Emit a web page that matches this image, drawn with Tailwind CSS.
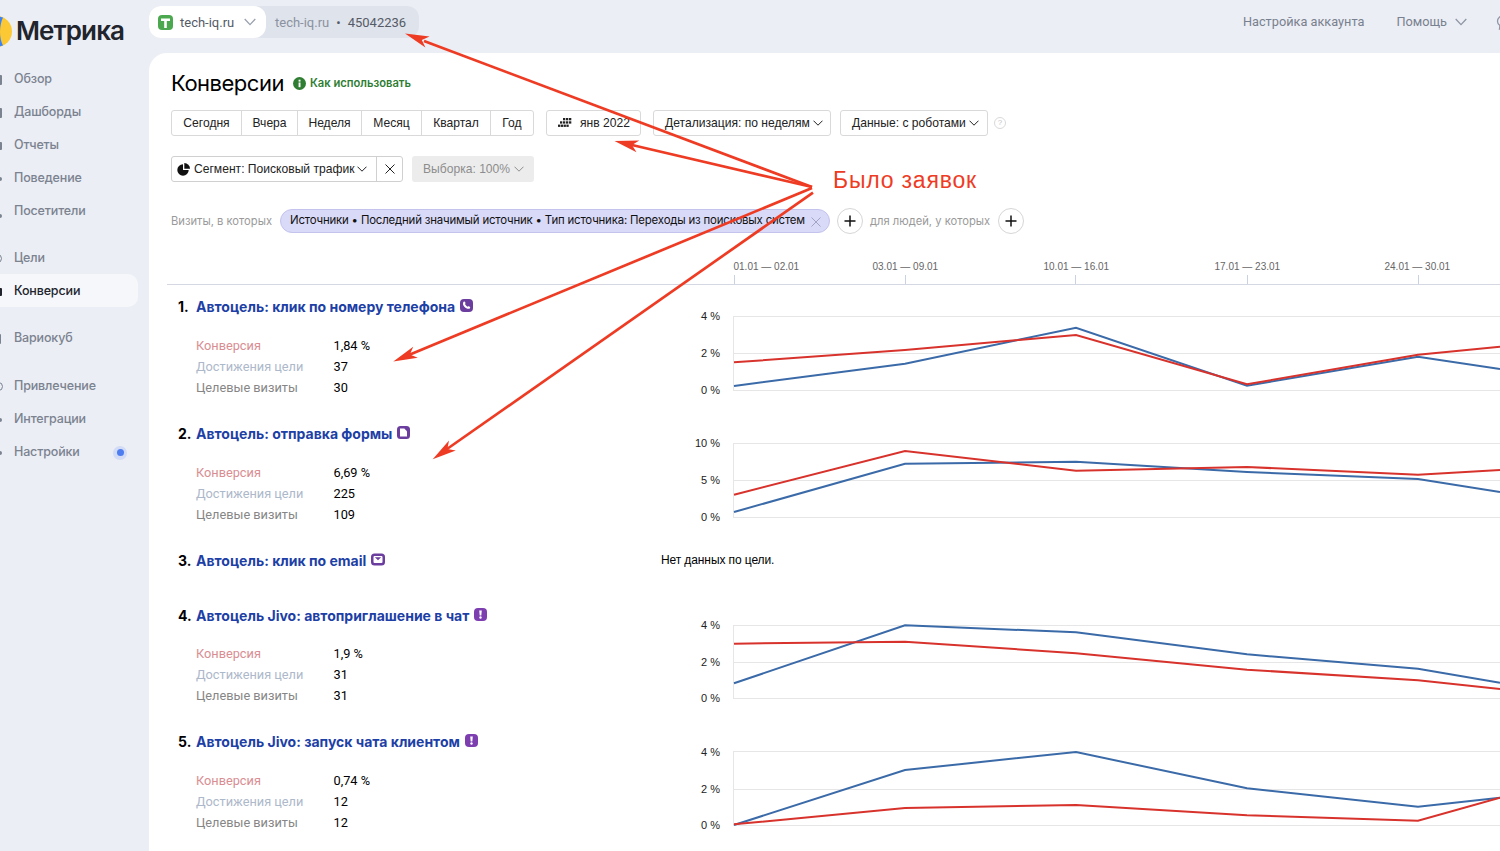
<!DOCTYPE html>
<html lang="ru">
<head>
<meta charset="utf-8">
<title>Метрика</title>
<script src="https://cdn.jsdelivr.net/npm/@tailwindcss/browser@4"></script>
</head>
<body class="h-[851px] w-[1500px] overflow-hidden bg-[#ebeef4] font-['Roboto',sans-serif] text-[13px] text-black">
<div class="relative h-[851px] w-[1500px] overflow-hidden">

  <!-- top bar -->
  <header class="flex h-[53px] items-start">
    <div class="flex h-[53px] w-[149px] items-center">
      <svg class="-ml-[19px] mt-[9px] shrink-0" width="31" height="31" viewBox="0 0 31 31"><circle cx="15.5" cy="15.5" r="15.5" fill="#fcc934"/><path d="M15.5 0A15.5 15.5 0 0 0 15.5 31L22 29.500C18 22 18 10 22 1.500Z" fill="#3b82f6"/></svg>
      <span class="ml-1 mt-[7px] font-['Inter',sans-serif] text-[26px] font-semibold tracking-[-0.9px] text-[#21242c]">Метрика</span>
    </div>
    <nav class="mt-[6px] flex h-8 w-[270px] rounded-[12px] bg-[#dfe3ec] pt-px">
      <div class="-mt-px flex h-8 w-[117px] items-center rounded-[12px] bg-white pl-[9px]">
        <svg width="15" height="15" viewBox="0 0 15 15"><rect width="15" height="15" rx="4" fill="#4ba84f"/><path d="M3 3.5h9v2.4H8.8V13H6.2V5.9H3z" fill="#fff"/></svg>
        <span class="ml-[7px] mt-px text-[#555b66]">tech-iq.ru</span>
        <svg class="ml-[10px]" width="12" height="8" viewBox="0 0 12 8"><path d="M.7 1l5.3 5.6L11.3 1" fill="none" stroke="#9aa1ae" stroke-width="1.3"/></svg>
      </div>
      <div class="flex items-center pl-[9px] text-[#8b92a0]">tech-iq.ru<span class="mx-[7px] text-[#555b66]">•</span><span class="text-[#555b66]">45042236</span></div>
    </nav>
    <div class="ml-auto mt-[12px] flex items-center text-[12.75px] text-[#79808f]">
      <span>Настройка аккаунта</span>
      <span class="ml-[32px]">Помощь</span>
      <svg class="ml-[8px]" width="12" height="8" viewBox="0 0 12 8"><path d="M.7 1l5.3 5.6L11.3 1" fill="none" stroke="#8e95a3" stroke-width="1.3"/></svg>
      <svg class="-mr-[12px] ml-[29px]" width="16" height="16" viewBox="0 0 16 16"><path d="M8 1.5c-3.6 0-6.5 2.5-6.5 5.7 0 1.8.9 3.3 2.4 4.4L3.5 15l3.6-2.2H8c3.6 0 6.5-2.5 6.5-5.6S11.600 1.500 8 1.500Z" fill="none" stroke="#8e95a3" stroke-width="1.300"/></svg>
    </div>
  </header>

  <div class="flex h-[798px]">
    <!-- sidebar -->
    <aside class="w-[149px] shrink-0 pt-[9px] font-['Inter',sans-serif] text-[12.5px] font-medium tracking-[-0.15px] text-[#7b8290]">
      <div class="flex h-[33px] items-center pt-0.5"><span class="ml-[-3px] h-[10px] w-[5px] rounded-[1px] bg-[#7b8290]"></span><span class="ml-3">Обзор</span></div>
      <div class="flex h-[33px] items-center pt-0.5"><span class="ml-[-3px] h-[10px] w-[5px] rounded-[1px] bg-[#7b8290]"></span><span class="ml-3">Дашборды</span></div>
      <div class="flex h-[33px] items-center pt-0.5"><span class="ml-[-3px] h-[8px] w-[5px] rounded-[1px] bg-[#7b8290]"></span><span class="ml-3">Отчеты</span></div>
      <div class="flex h-[33px] items-center pt-0.5"><span class="ml-[-2px] h-1 w-1 rounded-full bg-[#7b8290]"></span><span class="ml-3">Поведение</span></div>
      <div class="flex h-[33px] items-center pt-0.5"><span class="ml-[-3px] mt-2 h-[4px] w-[5px] rounded-[2px] bg-[#7b8290]"></span><span class="ml-3">Посетители</span></div>
      <div class="mt-[14px] flex h-[33px] items-center pt-0.5"><span class="ml-[-7px] h-[9px] w-[9px] rounded-full border-[1.5px] border-[#7b8290]"></span><span class="ml-3">Цели</span></div>
      <div class="flex h-[33px] w-[138px] items-center rounded-r-[10px] bg-[#f5f7fb] pt-0.5 text-[#21242c]"><span class="ml-[-2px] h-[8px] w-1 rounded-[1px] bg-[#21242c]"></span><span class="ml-3">Конверсии</span></div>
      <div class="mt-[14px] flex h-[33px] items-center pt-0.5"><span class="ml-[-3px] h-[10px] w-1 rounded-[1px] bg-[#7b8290]"></span><span class="ml-[13px]">Вариокуб</span></div>
      <div class="mt-[15px] flex h-[33px] items-center pt-0.5"><span class="ml-[-6px] h-[9px] w-[9px] rounded-full border-[1.5px] border-[#7b8290]"></span><span class="ml-[11px]">Привлечение</span></div>
      <div class="flex h-[33px] items-center pt-0.5"><span class="ml-[-2px] h-1 w-1 rounded-full bg-[#7b8290]"></span><span class="ml-3">Интеграции</span></div>
      <div class="flex h-[33px] w-[127px] items-center pt-0.5"><span class="ml-[-2px] h-1 w-1 rounded-full bg-[#7b8290]"></span><span class="ml-3">Настройки</span><span class="ml-auto flex h-[14px] w-[14px] items-center justify-center rounded-full bg-[#d3dcf6]"><span class="h-[7px] w-[7px] rounded-full bg-[#4d7df0]"></span></span></div>
    </aside>

    <!-- main -->
    <main class="w-[1351px] rounded-tl-[18px] bg-white">
      <div class="pl-[22px] pt-[15px]">
        <div class="flex h-[30px] items-center">
          <h1 class="font-['Inter',sans-serif] text-[22px] font-normal tracking-[-0.5px]">Конверсии</h1>
          <svg class="ml-[9px]" width="13" height="13" viewBox="0 0 13 13"><circle cx="6.500" cy="6.500" r="6.500" fill="#2e7d32"/><rect x="5.600" y="5.500" width="1.900" height="4.700" fill="#fff"/><rect x="5.600" y="2.700" width="1.900" height="1.900" fill="#fff"/></svg>
          <span class="ml-1 font-['Inter',sans-serif] text-[11.2px] font-semibold text-[#2e7d32]">Как использовать</span>
        </div>

        <div class="mt-3 flex h-[26px] whitespace-nowrap font-['Liberation_Sans',sans-serif] text-[12.1px] text-[#222]">
          <div class="flex h-[26px] rounded-[3px] border border-[#d9d9d9]">
            <span class="flex w-[70px] items-center justify-center border-r border-[#d9d9d9]">Сегодня</span>
            <span class="flex w-[56px] items-center justify-center border-r border-[#d9d9d9]">Вчера</span>
            <span class="flex w-[64px] items-center justify-center border-r border-[#d9d9d9]">Неделя</span>
            <span class="flex w-[60px] items-center justify-center border-r border-[#d9d9d9]">Месяц</span>
            <span class="flex w-[69px] items-center justify-center border-r border-[#d9d9d9]">Квартал</span>
            <span class="flex w-[42px] items-center justify-center">Год</span>
          </div>
          <div class="ml-3 flex h-[26px] w-[95px] items-center rounded-[3px] border border-[#d9d9d9] pl-[11px]">
            <svg width="14" height="11" viewBox="0 0 14 11" fill="#222"><rect x="5" y="0" width="2.300" height="2.300"/><rect x="8" y="0" width="2.300" height="2.300"/><rect x="11" y="0" width="2.300" height="2.300"/><rect x="2" y="3.300" width="2.300" height="2.300"/><rect x="5" y="3.300" width="2.300" height="2.300"/><rect x="8" y="3.300" width="2.300" height="2.300"/><rect x="11" y="3.300" width="2.300" height="2.300"/><rect x="0" y="6.600" width="2.300" height="2.300"/><rect x="2.800" y="6.600" width="2.300" height="2.300"/><rect x="5.600" y="6.600" width="2.300" height="2.300"/><rect x="8.400" y="6.600" width="2.300" height="2.300"/></svg>
            <span class="ml-[8px]">янв 2022</span>
          </div>
          <div class="ml-3 flex h-[26px] w-[178px] items-center rounded-[3px] border border-[#d9d9d9] pl-[11px]">
            <span>Детализация: по неделям</span>
            <svg class="ml-[3px]" width="10" height="6" viewBox="0 0 10 6"><path d="M.5.7 5 5.200 9.500.7" fill="none" stroke="#222" stroke-width="1"/></svg>
          </div>
          <div class="ml-[9px] flex h-[26px] w-[148px] items-center rounded-[3px] border border-[#d9d9d9] pl-[11px]">
            <span>Данные: с роботами</span>
            <svg class="ml-[3px]" width="10" height="6" viewBox="0 0 10 6"><path d="M.5.7 5 5.200 9.500.7" fill="none" stroke="#222" stroke-width="1"/></svg>
          </div>
          <span class="ml-[6px] mt-[7px] flex h-3 w-3 items-center justify-center rounded-full border border-[#d9d9d9] text-[8px] text-[#c4c4c4]">?</span>
        </div>

        <div class="mt-5 flex h-[26px] whitespace-nowrap font-['Liberation_Sans',sans-serif] text-[12.1px] text-[#222]">
          <div class="flex h-[26px] w-[232px] rounded-[3px] border border-[#d0d0d0]">
            <div class="flex w-[205px] items-center border-r border-[#d0d0d0] pl-[5px]">
              <svg width="13" height="13" viewBox="0 0 13 13"><path d="M6 1.300A5.700 5.700 0 1 0 11.700 7H6z" fill="#111"/><path d="M7.300 0v5.700H13A5.700 5.700 0 0 0 7.300 0z" fill="#111"/></svg>
              <span class="ml-[4px]">Сегмент: Поисковый трафик</span>
              <svg class="ml-[3px]" width="10" height="6" viewBox="0 0 10 6"><path d="M.5.7 5 5.200 9.500.7" fill="none" stroke="#222" stroke-width="1"/></svg>
            </div>
            <div class="flex flex-1 items-center justify-center">
              <svg width="10" height="10" viewBox="0 0 10 10"><path d="M.5.5l9 9M9.500.5l-9 9" stroke="#222" stroke-width="1"/></svg>
            </div>
          </div>
          <div class="ml-[9px] flex h-[26px] w-[122px] items-center rounded-[3px] bg-[#ececec] pl-[11px] text-[#8d8d8d]">
            <span>Выборка: 100%</span>
            <svg class="ml-[4px]" width="10" height="6" viewBox="0 0 10 6"><path d="M.5.7 5 5.200 9.500.7" fill="none" stroke="#8d8d8d" stroke-width="1"/></svg>
          </div>
        </div>

        <div class="mt-[27px] flex h-6 items-center whitespace-nowrap font-['Inter',sans-serif] text-[11.2px] text-[#9a9a9a]">
          <span class="w-[109px]">Визиты, в которых</span>
          <div class="relative flex h-6 w-[550px] items-center rounded-full border border-[#c3c3ee] bg-[#d9d9f8] pl-[9px] text-[#111]">
            <span class="text-[11.4px] tracking-[-0.17px]">Источники • Последний значимый источник • Тип источника: Переходы из поисковых систем</span>
            <svg class="absolute right-[8px] top-[7px]" width="10" height="10" viewBox="0 0 10 10"><path d="M.5.5l9 9M9.500.5l-9 9" stroke="#a3a3c4" stroke-width="1"/></svg>
          </div>
          <span class="ml-[7px] flex h-[26px] w-[26px] items-center justify-center rounded-full border border-[#d6d6d6] bg-white"><svg width="12" height="12" viewBox="0 0 12 12"><path d="M6 .5v11M.5 6h11" stroke="#111" stroke-width="1.500"/></svg></span>
          <span class="ml-[7px] w-[128px]">для людей, у которых</span>
          <span class="flex h-[26px] w-[26px] items-center justify-center rounded-full border border-[#d6d6d6] bg-white"><svg width="12" height="12" viewBox="0 0 12 12"><path d="M6 .5v11M.5 6h11" stroke="#111" stroke-width="1.500"/></svg></span>
        </div>
      </div>

      <!-- axis -->
      <div class="ml-[18px] h-[52px] border-b border-[#d5d8e3]">
        <svg class="block" width="1333" height="51" viewBox="167 233 1333 51" font-family="Liberation Sans" font-size="10" fill="#666">
          <text x="733.500" y="270">01.01 — 02.01</text><path d="M734.500 275v9" stroke="#c9d2e3"/>
          <text x="872.500" y="270">03.01 — 09.01</text><path d="M905.500 275v9" stroke="#c9d2e3"/>
          <text x="1043.500" y="270">10.01 — 16.01</text><path d="M1075.500 275v9" stroke="#c9d2e3"/>
          <text x="1214.500" y="270">17.01 — 23.01</text><path d="M1247.500 275v9" stroke="#c9d2e3"/>
          <text x="1384.500" y="270">24.01 — 30.01</text><path d="M1418.500 275v9" stroke="#c9d2e3"/>
        </svg>
      </div>

      <!-- goals -->
      <div class="ml-[18px] pt-[10px]">
        <!-- 1 -->
        <section class="flex h-[127px]">
          <div class="w-[523px] shrink-0 pl-[11px]">
            <h2 class="flex h-[22px] items-center font-['Inter',sans-serif] text-[14px] font-bold"><span class="w-[18px]">1.</span><span class="text-[#1d3fa6]">Автоцель: клик по номеру телефона</span>
              <svg class="mb-[2px] ml-[5px]" width="13" height="13" viewBox="0 0 13 13"><rect width="13" height="13" rx="4" fill="#6a3d9e"/><path d="M3.500 3c.7-.6 1.300-.5 1.700.3.400.8.300 1.300-.2 1.800.5 1.200 1.400 2.100 2.800 2.700.5-.5 1.100-.6 1.800-.1.800.5.800 1.100.2 1.700-.8.700-2 .6-3.500-.2C4.600 8.300 3.400 6.900 3 5.300c-.2-1 0-1.800.5-2.300z" fill="#fff"/></svg>
            </h2>
            <dl class="mt-[18px] grid grid-cols-[137.500px_1fr] pl-[18px] text-[12.75px] leading-[21px]">
              <dt class="text-[#d98d92]">Конверсия</dt><dd>1,84 %</dd>
              <dt class="text-[#adb8ca]">Достижения цели</dt><dd>37</dd>
              <dt class="text-[#868686]">Целевые визиты</dt><dd>30</dd>
            </dl>
          </div>
          <svg class="shrink-0" width="810" height="127" viewBox="690 295 810 127" font-family="Liberation Sans" font-size="11" fill="#222" text-anchor="end">
            <path d="M733.500 316.500H1500M733.500 353.500H1500M733.500 390.500H1500M733.500 316v75" stroke="#e6e6e6" fill="none"/>
            <text x="720" y="320">4 %</text><text x="720" y="357">2 %</text><text x="720" y="394">0 %</text>
            <polyline points="734,386 905,363.700 1076,327.700 1247,385.700 1418,356.700 1500,369" fill="none" stroke="#3b6aa8" stroke-width="2"/>
            <polyline points="734,362.300 905,350 1076,335 1247,384.300 1418,354.700 1500,346.700" fill="none" stroke="#d8322c" stroke-width="2"/>
          </svg>
        </section>
        <!-- 2 -->
        <section class="flex h-[127px]">
          <div class="w-[523px] shrink-0 pl-[11px]">
            <h2 class="flex h-[22px] items-center font-['Inter',sans-serif] text-[14px] font-bold"><span class="w-[18px]">2.</span><span class="text-[#1d3fa6]">Автоцель: отправка формы</span>
              <svg class="mb-[2px] ml-[5px]" width="13" height="13" viewBox="0 0 13 13"><rect width="13" height="13" rx="3.500" fill="#6a3d9e"/><path d="M3 2.500h4.300L10 5.200V10.500H3z" fill="#fff"/></svg>
            </h2>
            <dl class="mt-[18px] grid grid-cols-[137.500px_1fr] pl-[18px] text-[12.75px] leading-[21px]">
              <dt class="text-[#d98d92]">Конверсия</dt><dd>6,69 %</dd>
              <dt class="text-[#adb8ca]">Достижения цели</dt><dd>225</dd>
              <dt class="text-[#868686]">Целевые визиты</dt><dd>109</dd>
            </dl>
          </div>
          <svg class="shrink-0" width="810" height="127" viewBox="690 422 810 127" font-family="Liberation Sans" font-size="11" fill="#222" text-anchor="end">
            <path d="M733.500 443.500H1500M733.500 480.500H1500M733.500 517.500H1500M733.500 443v75" stroke="#e6e6e6" fill="none"/>
            <text x="720" y="447">10 %</text><text x="720" y="484">5 %</text><text x="720" y="521">0 %</text>
            <polyline points="734,512 905,463.700 1076,461.700 1247,472 1418,479 1500,492" fill="none" stroke="#3b6aa8" stroke-width="2"/>
            <polyline points="734,494.700 905,451 1076,470.700 1247,467 1418,474.700 1500,470" fill="none" stroke="#d8322c" stroke-width="2"/>
          </svg>
        </section>
        <!-- 3 -->
        <section class="flex h-[54px]">
          <div class="w-[494px] shrink-0 pl-[11px]">
            <h2 class="flex h-[22px] items-center font-['Inter',sans-serif] text-[14px] font-bold"><span class="w-[18px]">3.</span><span class="text-[#1d3fa6]">Автоцель: клик по email</span>
              <svg class="mb-[2px] ml-[5px]" width="14" height="13" viewBox="0 0 14 13"><rect y=".5" width="14" height="12" rx="3.500" fill="#6a3d9e"/><rect x="2.500" y="3" width="9" height="7" rx="1" fill="#fff"/><path d="M3.800 4.200h6.400L7 7.300z" fill="#6a3d9e"/></svg>
            </h2>
          </div>
          <p class="flex h-[22px] items-center font-['Liberation_Sans',sans-serif] text-[12px] tracking-[-0.1px]">Нет данных по цели.</p>
        </section>
        <!-- 4 -->
        <section class="flex h-[127px]">
          <div class="w-[523px] shrink-0 pl-[11px]">
            <h2 class="flex h-6 items-center font-['Inter',sans-serif] text-[14px] font-bold"><span class="w-[18px]">4.</span><span class="text-[#1d3fa6]">Автоцель Jivo: автоприглашение в чат</span>
              <svg class="mb-[2px] ml-[5px]" width="13" height="13" viewBox="0 0 13 13"><rect width="13" height="13" rx="4" fill="#7d3fb0"/><path d="M5.200 2.500h2.600L7.300 7.500H5.700z" fill="#fff"/><circle cx="6.500" cy="9.500" r="1.200" fill="#fff"/></svg>
            </h2>
            <dl class="mt-[16px] grid grid-cols-[137.500px_1fr] pl-[18px] text-[12.75px] leading-[21px]">
              <dt class="text-[#d98d92]">Конверсия</dt><dd>1,9 %</dd>
              <dt class="text-[#adb8ca]">Достижения цели</dt><dd>31</dd>
              <dt class="text-[#868686]">Целевые визиты</dt><dd>31</dd>
            </dl>
          </div>
          <svg class="shrink-0" width="810" height="127" viewBox="690 603 810 127" font-family="Liberation Sans" font-size="11" fill="#222" text-anchor="end">
            <path d="M733.500 625.500H1500M733.500 662.500H1500M733.500 698.500H1500M733.500 625v74" stroke="#e6e6e6" fill="none"/>
            <text x="720" y="629">4 %</text><text x="720" y="666">2 %</text><text x="720" y="702">0 %</text>
            <polyline points="734,683.300 905,625.300 1076,632.300 1247,654.300 1418,668.700 1500,682.700" fill="none" stroke="#3b6aa8" stroke-width="2"/>
            <polyline points="734,643.700 905,641.700 1076,653.300 1247,669.700 1418,680.300 1500,689" fill="none" stroke="#d8322c" stroke-width="2"/>
          </svg>
        </section>
        <!-- 5 -->
        <section class="flex h-[127px]">
          <div class="w-[523px] shrink-0 pl-[11px]">
            <h2 class="flex h-[23px] items-center font-['Inter',sans-serif] text-[14px] font-bold"><span class="w-[18px]">5.</span><span class="text-[#1d3fa6]">Автоцель Jivo: запуск чата клиентом</span>
              <svg class="mb-[2px] ml-[5px]" width="13" height="13" viewBox="0 0 13 13"><rect width="13" height="13" rx="4" fill="#7d3fb0"/><path d="M5.200 2.500h2.600L7.300 7.500H5.700z" fill="#fff"/><circle cx="6.500" cy="9.500" r="1.200" fill="#fff"/></svg>
            </h2>
            <dl class="mt-[17px] grid grid-cols-[137.500px_1fr] pl-[18px] text-[12.75px] leading-[21px]">
              <dt class="text-[#d98d92]">Конверсия</dt><dd>0,74 %</dd>
              <dt class="text-[#adb8ca]">Достижения цели</dt><dd>12</dd>
              <dt class="text-[#868686]">Целевые визиты</dt><dd>12</dd>
            </dl>
          </div>
          <svg class="shrink-0" width="810" height="127" viewBox="690 730 810 127" font-family="Liberation Sans" font-size="11" fill="#222" text-anchor="end">
            <path d="M733.500 751.500H1500M733.500 789.500H1500M733.500 825.500H1500M733.500 751v75" stroke="#e6e6e6" fill="none"/>
            <text x="720" y="756">4 %</text><text x="720" y="793">2 %</text><text x="720" y="829">0 %</text>
            <polyline points="734,825 905,770 1076,752 1247,788.300 1418,806.700 1500,797.700" fill="none" stroke="#3b6aa8" stroke-width="2"/>
            <polyline points="734,824.300 905,808 1076,805 1247,815.300 1418,820.700 1500,797.700" fill="none" stroke="#d8322c" stroke-width="2"/>
          </svg>
        </section>
      </div>
    </main>
  </div>

  <!-- annotation overlay -->
  <svg class="pointer-events-none absolute left-0 top-0" width="1500" height="851" viewBox="0 0 1500 851" fill="#ee3b24" stroke="none">
    <g stroke="#ee3b24" stroke-width="2.700" fill="none">
      <path d="M812 187 424 41"/>
      <path d="M812 187 632 145"/>
      <path d="M812 188 410 354.500"/>
      <path d="M813 192.700 447 449"/>
    </g>
    <polygon points="405,33.500 425.400,47.600 421.800,39.900 429.600,36.400"/>
    <polygon points="614.500,141 636.500,152.200 632,145.100 639.300,140.600"/>
    <polygon points="393.300,361.500 417.800,357.800 409.900,354.600 413.200,346.800"/>
    <polygon points="432.700,459.300 455.800,450.400 447.400,449 449,440.600"/>
  </svg>
  <span class="absolute left-[833px] top-[165px] font-['Liberation_Sans',sans-serif] text-[23px] leading-[30px] tracking-[0.8px] text-[#ee3b24]">Было заявок</span>
</div>
</body>
</html>
